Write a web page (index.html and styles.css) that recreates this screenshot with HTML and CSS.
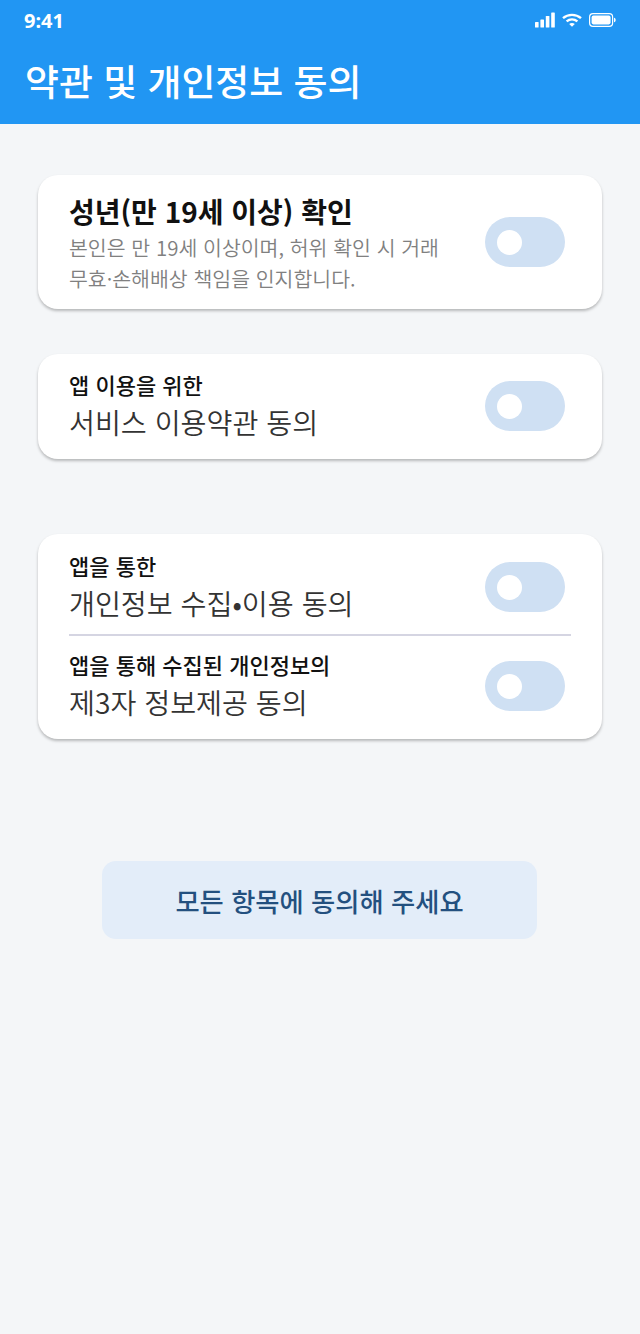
FILE: index.html
```html
<!DOCTYPE html>
<html lang="ko">
<head>
  <meta charset="UTF-8">
  <meta name="viewport" content="width=device-width, initial-scale=1.0">
  <title>약관 및 개인정보 동의</title>
  <link rel="stylesheet" href="styles.css">
</head>
<body>
  <header class="app-header">
    <div class="status-bar">
      <span class="status-time">9:41</span>
      <div class="status-icons">
        <svg width="20" height="16" viewBox="0 0 20 16" fill="#fff">
          <rect x="0" y="10" width="3.6" height="5.5" rx="0.6"/>
          <rect x="5.4" y="7.5" width="3.6" height="8" rx="0.6"/>
          <rect x="10.8" y="4" width="3.6" height="11.5" rx="0.6"/>
          <rect x="16.2" y="0.5" width="3.6" height="15" rx="0.6"/>
        </svg>
        <svg width="20" height="14" viewBox="0 0 20 14" fill="none" stroke="#fff" stroke-width="2.4">
          <path d="M1 5.2C6 .8 14 .8 19 5.2"/>
          <path d="M4.6 8.4C7.8 5.8 12.2 5.8 15.4 8.4"/>
          <path d="M10 13.8 7.2 10.9C8.8 9.6 11.2 9.6 12.8 10.9Z" fill="#fff" stroke="none"/>
        </svg>
        <svg width="27" height="14" viewBox="0 0 27 14" fill="none">
          <rect x="0.6" y="0.6" width="23" height="12.8" rx="3.4" stroke="#fff" stroke-width="1.2"/>
          <rect x="2.6" y="2.6" width="19" height="8.8" rx="1.8" fill="#fff"/>
          <path d="M25 4.8c1.1.3 1.7 1.1 1.7 2.2s-.6 1.9-1.7 2.2z" fill="#fff"/>
        </svg>
      </div>
    </div>
    <h1 class="app-title">약관 및 개인정보 동의</h1>
  </header>

  <main class="content">
    <section class="card card-adult">
      <div class="row">
        <div class="row-text-adult">
          <div class="adult-title">성년(만 19세 이상) 확인</div>
          <div class="adult-desc">본인은 만 19세 이상이며, 허위 확인 시 거래<br>무효·손해배상 책임을 인지합니다.</div>
        </div>
        <div class="toggle"><span class="knob"></span></div>
      </div>
    </section>

    <section class="card card-terms">
      <div class="row">
        <div class="row-text">
          <div class="row-small">앱 이용을 위한</div>
          <div class="row-large">서비스 이용약관 동의</div>
        </div>
        <div class="toggle"><span class="knob"></span></div>
      </div>
    </section>

    <section class="card card-privacy">
      <div class="row row-top">
        <div class="row-text">
          <div class="row-small">앱을 통한</div>
          <div class="row-large">개인정보 수집•이용 동의</div>
        </div>
        <div class="toggle"><span class="knob"></span></div>
      </div>
      <div class="divider"></div>
      <div class="row row-bottom">
        <div class="row-text">
          <div class="row-small">앱을 통해 수집된 개인정보의</div>
          <div class="row-large">제3자 정보제공 동의</div>
        </div>
        <div class="toggle"><span class="knob"></span></div>
      </div>
    </section>

    <button class="agree-btn">모든 항목에 동의해 주세요</button>
  </main>
</body>
</html>
```

FILE: styles.css
```css
* {
  box-sizing: border-box;
}
body {
  margin: 0;
  min-height: 1334px;
  background-color: #f4f6f8;
  color: #111;
  font-family: "Noto Sans CJK KR", "Noto Sans", sans-serif;
}
.app-header {
  height: 124px;
  background-color: #2196f3;
  color: #fff;
}
.status-bar {
  height: 40px;
  padding: 0 24px;
  display: flex;
  justify-content: space-between;
  align-items: center;
}
.status-time {
  font-family: "Noto Sans", sans-serif;
  font-size: 20px;
  font-weight: 700;
}
.status-icons {
  display: flex;
  align-items: center;
  gap: 7px;
}
.app-title {
  margin: 0;
  padding: 15px 0 0 25px;
  font-size: 36.9px;
  line-height: 50px;
  font-weight: 500;
}
.content {
  padding: 51px 38px 0;
  display: flex;
  flex-direction: column;
}
.card {
  background: #fff;
  border-radius: 20px;
  box-shadow: 0 2px 3px rgba(0, 0, 0, 0.25);
  padding: 0 37px 0 31px;
}
.card-adult {
  height: 134px;
  margin-bottom: 45px;
  display: flex;
  align-items: center;
}
.card-terms {
  height: 105px;
  padding-bottom: 1px;
  margin-bottom: 75px;
  display: flex;
  align-items: center;
}
.card-privacy {
  height: 205px;
  margin-bottom: 122px;
}
.row {
  width: 100%;
  display: flex;
  justify-content: space-between;
  align-items: center;
}
.row-text {
  padding-top: 1px;
}
.row-top {
  height: 100px;
  padding-top: 6px;
}
.row-bottom {
  height: 100px;
}
.divider {
  height: 2px;
  margin-right: -6px;
  background-color: #d5d5e2;
}
.adult-title {
  font-size: 28px;
  line-height: 42px;
  font-weight: 700;
}
.adult-desc {
  font-size: 20.5px;
  line-height: 31px;
  font-weight: 350;
  color: #808080;
}
.row-small {
  font-size: 22px;
  line-height: 30px;
  font-weight: 500;
}
.row-large {
  font-size: 28.2px;
  line-height: 46px;
  font-weight: 350;
  color: #333;
}
.toggle {
  width: 80px;
  height: 50px;
  flex-shrink: 0;
  border-radius: 25px;
  background-color: #cfe0f3;
  padding-left: 12px;
  display: flex;
  align-items: center;
}
.knob {
  width: 25px;
  height: 25px;
  border-radius: 50%;
  background: #fff;
}
.agree-btn {
  align-self: flex-start;
  margin-left: 64px;
  width: 435px;
  height: 78px;
  border: none;
  border-radius: 14px;
  background-color: #e3edf9;
  color: #23507f;
  font-family: inherit;
  font-size: 26.3px;
  font-weight: 500;
}
```
